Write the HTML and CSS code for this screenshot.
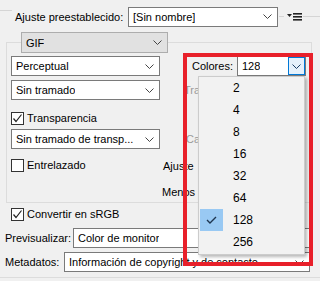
FILE: index.html
```html
<!DOCTYPE html>
<html lang="es">
<head>
    <meta charset="UTF-8">
    <title>Guardar para Web</title>
    <link rel="stylesheet" href="styles.css">
</head>
<body>
    <div class="panel">
        <div class="preset">
            <span class="stub"></span>
            <label class="preset-label">Ajuste preestablecido:</label>
            <div class="select preset-select"><span>[Sin nombre]</span>
                <svg class="chev" width="9" height="5" viewBox="0 0 9 5"><path d="M0.5 0.5 L4.5 4.5 L8.5 0.5" fill="none" stroke="#444" stroke-width="1"/></svg>
            </div>
            <span class="rule short"></span>
            <svg class="menu-icon" width="15" height="8" viewBox="0 0 15 8"><path d="M0 1 H5 L2.5 4 Z" fill="#222"/><rect x="6" y="0" width="9" height="1.6" fill="#222"/><rect x="6" y="3" width="9" height="1.6" fill="#222"/><rect x="6" y="6" width="9" height="1.6" fill="#222"/></svg>
            <span class="rule grow"></span>
        </div>

        <div class="group">
            <div class="select gray gif"><span>GIF</span>
                <svg class="chev" width="9" height="5" viewBox="0 0 9 5"><path d="M0.5 0.5 L4.5 4.5 L8.5 0.5" fill="none" stroke="#444" stroke-width="1"/></svg>
            </div>
            <div class="cols">
                <div class="col-left">
                    <div class="select field"><span>Perceptual</span>
                        <svg class="chev" width="9" height="5" viewBox="0 0 9 5"><path d="M0.5 0.5 L4.5 4.5 L8.5 0.5" fill="none" stroke="#444" stroke-width="1"/></svg>
                    </div>
                    <div class="select field mt4"><span>Sin tramado</span>
                        <svg class="chev" width="9" height="5" viewBox="0 0 9 5"><path d="M0.5 0.5 L4.5 4.5 L8.5 0.5" fill="none" stroke="#444" stroke-width="1"/></svg>
                    </div>
                    <div class="check-row mt9">
                        <span class="box"><svg width="11" height="11" viewBox="0 0 11 11"><path d="M1.5 5.5 L4 8.5 L9.5 1.5" fill="none" stroke="#222" stroke-width="1.2"/></svg></span>
                        <span>Transparencia</span>
                    </div>
                    <div class="select field mt2"><span>Sin tramado de transp...</span>
                        <svg class="chev" width="9" height="5" viewBox="0 0 9 5"><path d="M0.5 0.5 L4.5 4.5 L8.5 0.5" fill="none" stroke="#444" stroke-width="1"/></svg>
                    </div>
                    <div class="check-row mt7">
                        <span class="box"></span>
                        <span>Entrelazado</span>
                    </div>
                </div>
                <div class="col-right">
                    <div class="colors-row">
                        <label class="colors-label">Colores:</label>
                        <div class="select colors-select"><span>128</span>
                            <span class="drop-btn"><svg width="9" height="5" viewBox="0 0 9 5"><path d="M0.5 0.5 L4.5 4.5 L8.5 0.5" fill="none" stroke="#1b3f66" stroke-width="1"/></svg></span>
                        </div>
                    </div>
                    <div class="opt-row mt4 dim ind22">Tra</div>
                    <div class="opt-row mt9 short-row"></div>
                    <div class="opt-row mt2 dim ind24">Ca</div>
                    <div class="opt-row mt7 ind1">Ajuste</div>
                    <div class="opt-row mt6">Menos</div>
                </div>
            </div>
        </div>

        <div class="check-row srgb">
            <span class="box"><svg width="11" height="11" viewBox="0 0 11 11"><path d="M1.5 5.5 L4 8.5 L9.5 1.5" fill="none" stroke="#222" stroke-width="1.2"/></svg></span>
            <span>Convertir en sRGB</span>
        </div>
        <div class="line-row mt5">
            <label class="preview-label">Previsualizar:</label>
            <div class="select wide"><span>Color de monitor</span>
                <svg class="chev" width="9" height="5" viewBox="0 0 9 5"><path d="M0.5 0.5 L4.5 4.5 L8.5 0.5" fill="none" stroke="#444" stroke-width="1"/></svg>
            </div>
        </div>
        <div class="line-row mt4">
            <label class="meta-label">Metadatos:</label>
            <div class="select wide"><span>Información de copyright y de contacto</span>
                <svg class="chev" width="9" height="5" viewBox="0 0 9 5"><path d="M0.5 0.5 L4.5 4.5 L8.5 0.5" fill="none" stroke="#444" stroke-width="1"/></svg>
            </div>
        </div>
        <div class="bottom-rule"></div>
    </div>

    <ul class="list">
        <li>2</li>
        <li>4</li>
        <li>8</li>
        <li>16</li>
        <li>32</li>
        <li>64</li>
        <li class="checked"><span class="tick"><svg width="11" height="8" viewBox="0 0 11 8"><path d="M1 4 L4 7 L10 1" fill="none" stroke="#1e3550" stroke-width="1.4"/></svg></span>128</li>
        <li>256</li>
    </ul>
    <div class="mark"></div>
</body>
</html>
```

FILE: styles.css
```css
body { margin: 0; background: #f0f0f0; font-family: "Liberation Sans", Arial, sans-serif; font-size: 11px; color: #000; width: 320px; height: 281px; overflow: hidden; position: relative; }
.panel { padding-top: 6px; }

.preset { display: flex; align-items: center; height: 21px; }
.stub { width: 12px; border-top: 1px solid #d5d5d5; align-self: flex-start; margin-top: 4px; margin-right: 3px; }
.preset-label { width: 113px; }
.preset-select { width: 150px; height: 21px; }
.rule { border-top: 1px solid #d5d5d5; }
.rule.short { width: 5px; margin-left: 1px; }
.menu-icon { margin: 0 1px 0 3px; }
.rule.grow { flex: 1; }

.select { display: flex; align-items: center; justify-content: space-between; box-sizing: border-box; height: 20px; background: #fff; border: 1px solid #7a7a7a; padding: 0 5px 0 4px; white-space: nowrap; overflow: hidden; }
.select span { overflow: hidden; }
.chev { flex: none; }
.select.gray { background: #e1e1e1; border-color: #adadad; }

.group { box-sizing: border-box; height: 161px; margin: 15px 8px 0 6px; border: 1px solid #dcdcdc; }
.gif { width: 147px; height: 21px; margin: -11px 0 0 14px; }
.cols { display: flex; margin-top: 3px; }
.col-left { width: 149px; padding-left: 4px; }
.col-right { flex: 1; padding: 0 5px 0 2px; }
.field { width: 149px; }

.check-row { display: flex; align-items: center; height: 18px; }
.box { box-sizing: border-box; width: 13px; height: 13px; border: 1px solid #333; background: #fff; margin-right: 3px; display: flex; align-items: center; justify-content: center; }

.colors-row { display: flex; align-items: center; height: 20px; }
.colors-label { margin-left: 30px; }
.colors-select { width: 69px; margin-left: auto; padding-right: 0; }
.drop-btn { box-sizing: border-box; width: 17px; height: 18px; background: #e5f1fb; border: 1px solid #0078d7; display: flex; align-items: center; justify-content: center; }
.opt-row { height: 20px; display: flex; align-items: center; white-space: nowrap; }
.short-row { height: 18px; }
.dim { color: #9a9a9a; }
.ind22 { padding-left: 22px; }
.ind24 { padding-left: 24px; }
.ind1 { padding-left: 1px; }

.mt2 { margin-top: 2px; }
.mt4 { margin-top: 4px; }
.mt5 { margin-top: 5px; }
.mt6 { margin-top: 6px; }
.mt7 { margin-top: 7px; }
.mt9 { margin-top: 9px; }

.srgb { margin: 2px 0 0 11px; }
.line-row { display: flex; align-items: center; padding-left: 5px; }
.preview-label { width: 68px; }
.meta-label { width: 59px; }
.wide { flex: 1; margin-right: 10px; }
.bottom-rule { margin-top: 5px; border-top: 1px solid #dcdcdc; }

.list { position: absolute; left: 198px; top: 76px; width: 107px; height: 179px; box-sizing: border-box; margin: 0; padding: 0; list-style: none; background: #f2f2f2; border: 1px solid #cccccc; box-shadow: 2px 2px 3px rgba(0, 0, 0, 0.28); }
.list li { position: relative; height: 22px; line-height: 22px; padding-left: 34px; font-size: 12px; }
.tick { position: absolute; left: 1px; top: 0; width: 23px; height: 22px; background: #99c9f3; display: flex; align-items: center; justify-content: center; }

.mark { position: absolute; left: 183px; top: 53px; width: 130px; height: 213px; box-sizing: border-box; border: 4px solid #e8202a; }
```
